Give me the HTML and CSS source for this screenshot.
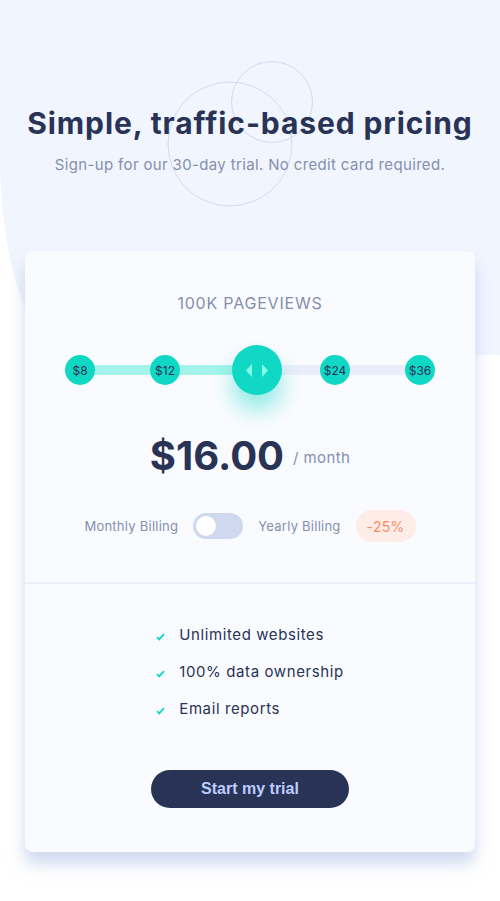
FILE: index.html
```html
<!DOCTYPE html>
<html lang="en">
<head>
<meta charset="utf-8">
<title>Pricing</title>
<link rel="stylesheet" href="styles.css">
</head>
<body>
<div class="page">
  <div class="bg"></div>
  <svg class="pattern" width="500" height="260" viewBox="0 0 500 260">
    <circle cx="230" cy="144" r="62" fill="none" stroke="#d3daf0" stroke-width="1"/>
    <circle cx="272" cy="102" r="40.5" fill="none" stroke="#d3daf0" stroke-width="1"/>
  </svg>
  <header class="hero">
    <h1 class="title">Simple, traffic-based pricing</h1>
    <p class="subtitle">Sign-up for our 30-day trial. No credit card required.</p>
  </header>
  <main class="card">
    <section class="top">
      <p class="views">100K PAGEVIEWS</p>
      <div class="slider">
        <div class="track"><div class="fill"></div></div>
        <div class="dots">
          <span class="dot">$8</span>
          <span class="dot">$12</span>
          <span class="dot">$24</span>
          <span class="dot">$36</span>
        </div>
        <div class="thumb">
          <svg width="22" height="13" viewBox="0 0 22 13"><path d="M6 0v13L0 6.5z" fill="#80ffe9"/><path d="M16 0v13l6-6.5z" fill="#80ffe9"/></svg>
        </div>
      </div>
      <div class="price"><span class="amount">$16.00</span><span class="per">/ month</span></div>
      <div class="billing">
        <span class="label">Monthly Billing</span>
        <span class="toggle"><span class="knob"></span></span>
        <span class="label">Yearly Billing</span>
        <span class="badge">-25%</span>
      </div>
    </section>
    <section class="bottom">
      <ul class="features">
        <li><svg class="check" width="9" height="8" viewBox="0 0 9 8"><path d="M1 4.2l2.2 2.2L8 1.2" fill="none" stroke="#10d8c4" stroke-width="1.8"/></svg>Unlimited websites</li>
        <li><svg class="check" width="9" height="8" viewBox="0 0 9 8"><path d="M1 4.2l2.2 2.2L8 1.2" fill="none" stroke="#10d8c4" stroke-width="1.8"/></svg>100% data ownership</li>
        <li><svg class="check" width="9" height="8" viewBox="0 0 9 8"><path d="M1 4.2l2.2 2.2L8 1.2" fill="none" stroke="#10d8c4" stroke-width="1.8"/></svg>Email reports</li>
      </ul>
      <button class="cta">Start my trial</button>
    </section>
  </main>
</div>
</body>
</html>
```

FILE: styles.css
```css
* { box-sizing: border-box; }
html, body { margin: 0; padding: 0; }
body {
  background: #ffffff;
  font-family: "Inter", "Noto Sans", sans-serif;
  color: #293356;
}
.page {
  position: relative;
  width: 500px;
  min-height: 901px;
  padding-top: 104px;
}
.bg {
  position: absolute;
  top: 0; left: 0; right: 0;
  height: 355px;
  background: #f1f5fe;
  border-bottom-left-radius: 70px 200px;
}
.pattern {
  position: absolute;
  top: 0; left: 0;
}
.hero {
  position: relative;
  text-align: center;
}
.title {
  margin: 0;
  font-size: 30px;
  line-height: 38px;
  font-weight: 700;
  color: #293356;
  letter-spacing: 0.9px;
}
.subtitle {
  margin: 13px 0 0;
  font-size: 15px;
  line-height: 20px;
  letter-spacing: 0.35px;
  color: #858fad;
}
.card {
  position: relative;
  margin: 76px 25px 0;
  background: #fafbff;
  border-radius: 8px;
  box-shadow: 0 12px 16px rgba(170, 186, 228, 0.55);
}
.top {
  padding: 42px 0 40px;
  display: flex;
  flex-direction: column;
  align-items: center;
  border-bottom: 2px solid #ecf0fb;
}
.views {
  margin: 0;
  font-size: 16px;
  line-height: 20px;
  letter-spacing: 0.8px;
  color: #858fad;
}
.slider {
  position: relative;
  margin-top: 42px;
  width: 370px;
  height: 30px;
}
.track {
  position: absolute;
  left: 15px; right: 15px;
  top: 10px;
  height: 10px;
  background: #eaeefb;
}
.fill {
  width: 177px;
  height: 100%;
  background: #a4f3eb;
}
.dots {
  position: relative;
  display: flex;
  justify-content: space-between;
}
.dot {
  width: 30px;
  height: 30px;
  border-radius: 50%;
  background: #10d8c4;
  color: #293356;
  font-size: 12px;
  display: flex;
  align-items: center;
  justify-content: center;
}
.dot:nth-child(2) { margin-right: auto; margin-left: 55px; }
.dot:nth-child(3) { margin-right: 55px; }
.thumb {
  position: absolute;
  left: 167px;
  top: -10px;
  width: 50px;
  height: 50px;
  border-radius: 50%;
  background: #10d8c4;
  box-shadow: 0 15px 22px rgba(16, 216, 196, 0.45);
  display: flex;
  align-items: center;
  justify-content: center;
}
.price {
  margin-top: 46px;
  display: flex;
  align-items: center;
  gap: 9px;
  height: 48px;
}
.amount {
  font-size: 40px;
  font-weight: 700;
  letter-spacing: 0;
  color: #293356;
}
.per {
  font-size: 15px;
  letter-spacing: 0.4px;
  color: #858fad;
  padding-top: 4px;
}
.billing {
  margin-top: 31px;
  display: flex;
  align-items: center;
  height: 32px;
}
.label {
  font-size: 13px;
  letter-spacing: 0.25px;
  color: #858fad;
}
.toggle {
  margin: 0 15px 0 15px;
  width: 50px;
  height: 26px;
  border-radius: 13px;
  background: #cfd8ef;
  display: flex;
  align-items: center;
  padding-left: 3px;
}
.knob {
  width: 20px;
  height: 20px;
  border-radius: 50%;
  background: #ffffff;
}
.badge {
  margin-left: 15px;
  width: 60px;
  height: 32px;
  border-radius: 16px;
  background: #feece7;
  color: #ff8c66;
  font-size: 14px;
  letter-spacing: 0.3px;
  display: flex;
  align-items: center;
  justify-content: center;
}
.bottom {
  padding: 40px 0 44px;
  display: flex;
  flex-direction: column;
  align-items: center;
}
.features {
  margin: 0;
  padding: 0;
  list-style: none;
  display: flex;
  flex-direction: column;
  gap: 15px;
}
.features li {
  display: flex;
  align-items: center;
  font-size: 15px;
  line-height: 22px;
  letter-spacing: 0.6px;
  color: #293356;
}
.check {
  margin-right: 14px;
  margin-top: 4px;
}
.cta {
  margin-top: 50px;
  width: 198px;
  height: 38px;
  border: none;
  border-radius: 19px;
  background: #293356;
  color: #bdccff;
  font-family: "Liberation Sans", Arial, sans-serif;
  font-weight: 700;
  font-size: 16px;
}
```
